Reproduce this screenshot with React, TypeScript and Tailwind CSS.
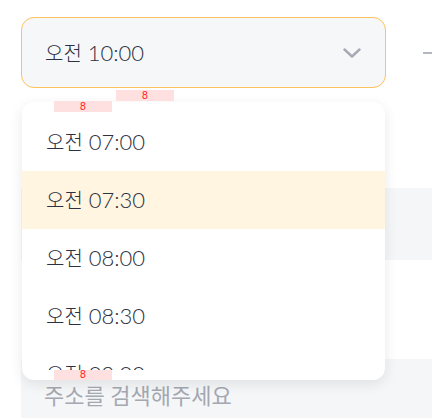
import React from "react";

const times = ["07:00", "07:30", "08:00", "08:30", "09:00", "09:30"];

function Badge({ className }: { className: string }) {
  return (
    <div
      className={`absolute flex items-center justify-center bg-[#ffe0e0] text-[#ff2a2a] text-[10px] leading-none font-['DejaVu_Sans',sans-serif] ${className}`}
    >
      8
    </div>
  );
}

function TimeText({ time }: { time: string }) {
  return (
    <span className="text-[22px] leading-none text-[#2c3142] font-light">
      <span className="text-[20px]">오전</span> {time}
    </span>
  );
}

export default function App() {
  return (
    <div className="relative w-[432px] h-[418px] overflow-hidden bg-white font-['Lato','Noto_Sans_CJK_KR',sans-serif]">
      <div className="flex flex-col pl-[21px] pt-[17px]">
        <div className="flex items-center">
          <div className="flex shrink-0 items-center justify-between w-[365px] h-[71px] rounded-[13px] border border-[#fcc35e] bg-[#f6f7f9] pl-[23px] pr-[24px]">
            <TimeText time="10:00" />
            <svg width="18" height="10" viewBox="0 0 18 10" fill="none">
              <path d="M1.5 1.5 L9 8.5 L16.5 1.5" stroke="#a6aab3" strokeWidth="2.4" strokeLinecap="round" strokeLinejoin="round" />
            </svg>
          </div>
          <div className="ml-[37px] w-[14px] h-[2px] bg-[#b3b7bf] shrink-0" />
        </div>
        <div className="mt-[100px] h-[72px] w-[411px] bg-[#f5f6f8]" />
        <div className="mt-[99px] h-[72px] w-[411px] shrink-0 bg-[#f5f6f8] flex items-center pl-[23px]">
          <span className="text-[22px] text-[#a4a8b1]">주소를 검색해주세요</span>
        </div>
      </div>

      <div className="absolute left-[22px] top-[102px] w-[363px] h-[278px] rounded-[12px] bg-white shadow-[0_4px_14px_rgba(0,0,0,0.09)] pt-[11px]">
        <div className="h-[257px] overflow-hidden">
          {times.map((t, i) => (
            <div
              key={t}
              className={`flex items-center h-[58px] pl-[24px] ${i === 1 ? "bg-[#fff5e1]" : ""}`}
            >
              <TimeText time={t} />
            </div>
          ))}
        </div>
      </div>

      <Badge className="left-[116px] top-[90px] w-[58px] h-[11px]" />
      <Badge className="left-[54px] top-[101px] w-[58px] h-[11px]" />
      <Badge className="left-[54px] top-[370px] w-[58px] h-[10px]" />
    </div>
  );
}
